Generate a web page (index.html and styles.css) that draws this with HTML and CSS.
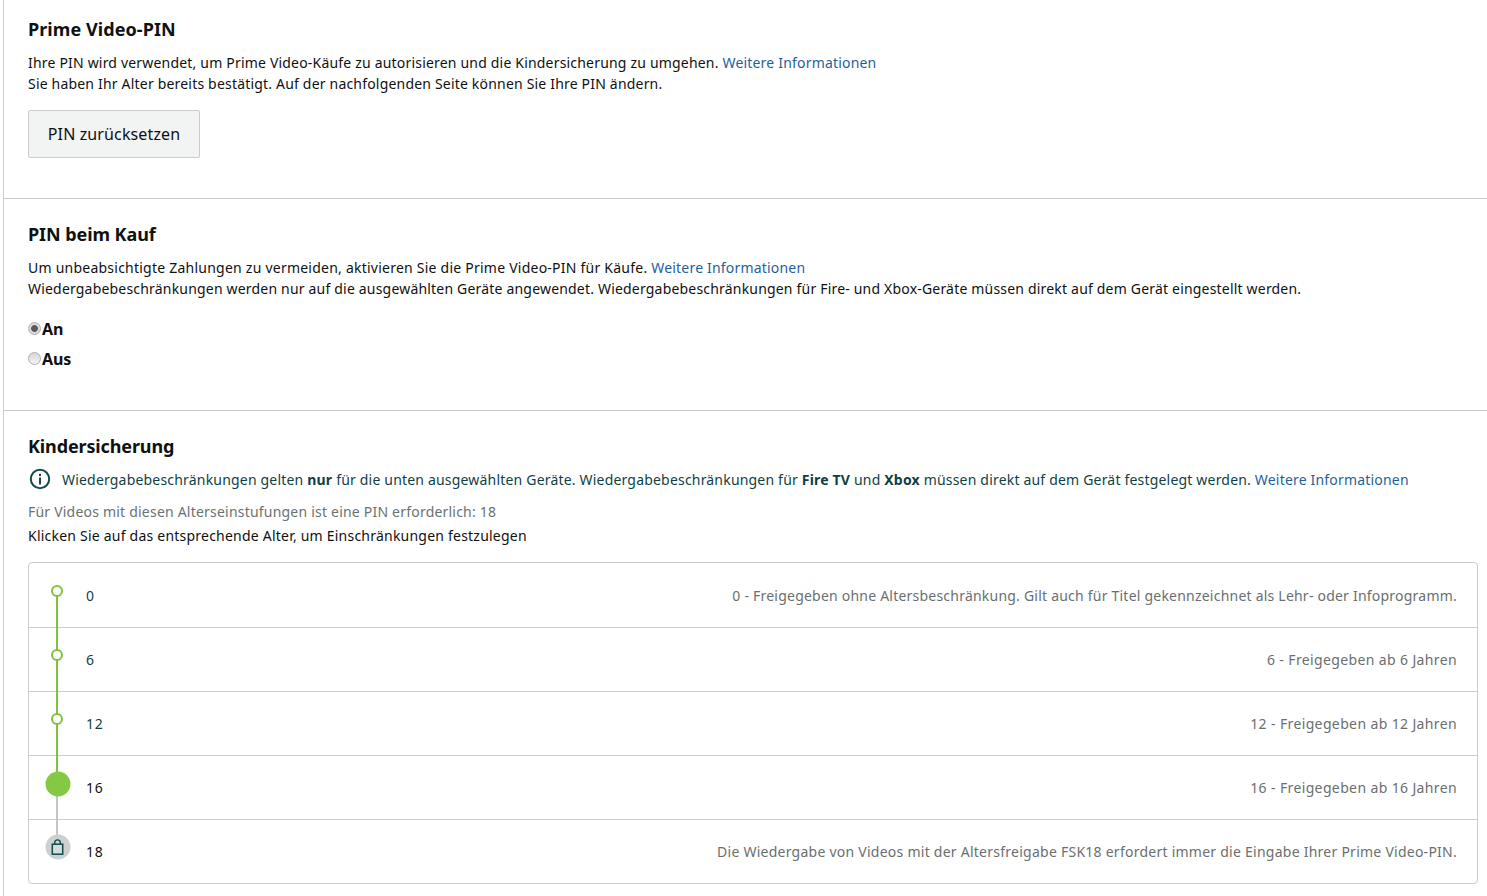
FILE: index.html
```html
<!DOCTYPE html>
<html lang="de">
<head>
<meta charset="utf-8">
<title>Prime Video-PIN</title>
<link rel="stylesheet" href="styles.css">
</head>
<body>
<main class="page">
  <section class="section section-pin">
    <h2 class="title">Prime Video-PIN</h2>
    <p class="text">Ihre PIN wird verwendet, um Prime Video-Käufe zu autorisieren und die Kindersicherung zu umgehen. <a class="link" href="#">Weitere Informationen</a><br>Sie haben Ihr Alter bereits bestätigt. Auf der nachfolgenden Seite können Sie Ihre PIN ändern.</p>
    <button class="button" type="button">PIN zurücksetzen</button>
  </section>
  <section class="section section-buy">
    <h2 class="title">PIN beim Kauf</h2>
    <p class="text"><span class="wide">Um unbeabsichtigte Zahlungen zu vermeiden, aktivieren Sie die Prime Video-PIN für Käufe. </span><a class="link" href="#">Weitere Informationen</a><br>Wiedergabebeschränkungen werden nur auf die ausgewählten Geräte angewendet. Wiedergabebeschränkungen für Fire- und Xbox-Geräte müssen direkt auf dem Gerät eingestellt werden.</p>
    <div class="radios">
      <label class="radio"><span class="radio-dot radio-on"></span>An</label>
      <label class="radio"><span class="radio-dot"></span>Aus</label>
    </div>
  </section>
  <section class="section section-kids">
    <h2 class="title">Kindersicherung</h2>
    <div class="notice">
      <svg class="info" viewBox="0 0 24 24" width="24" height="24" aria-hidden="true"><circle cx="12" cy="12" r="9.2" fill="none" stroke="#0f4c4a" stroke-width="2"/><rect x="11" y="10.5" width="2" height="7" fill="#0f4c4a"/><rect x="11" y="6.8" width="2" height="2.2" fill="#0f4c4a"/></svg>
      <p class="notice-text">Wiedergabebeschränkungen gelten <b>nur</b> für die unten ausgewählten Geräte. Wiedergabebeschränkungen für <b>Fire TV</b> und <b>Xbox</b> müssen direkt auf dem Gerät festgelegt werden. <a class="link" href="#">Weitere Informationen</a></p>
    </div>
    <p class="muted">Für Videos mit diesen Alterseinstufungen ist eine PIN erforderlich: 18</p>
    <p class="hint">Klicken Sie auf das entsprechende Alter, um Einschränkungen festzulegen</p>
    <ul class="ratings">
      <li class="rating on"><span class="node ring"></span><span class="age">0</span><span class="desc">0 - Freigegeben ohne Altersbeschränkung. Gilt auch für Titel gekennzeichnet als Lehr- oder Infoprogramm.</span></li>
      <li class="rating on"><span class="node ring"></span><span class="age">6</span><span class="desc desc-short">6 - Freigegeben ab 6 Jahren</span></li>
      <li class="rating on"><span class="node ring"></span><span class="age">12</span><span class="desc desc-short">12 - Freigegeben ab 12 Jahren</span></li>
      <li class="rating current"><span class="node solid"></span><span class="age strong">16</span><span class="desc desc-short">16 - Freigegeben ab 16 Jahren</span></li>
      <li class="rating locked"><span class="node lock"><svg viewBox="0 0 16 18" width="16" height="18" aria-hidden="true"><path d="M5.2 5.6V4.2a2.8 2.8 0 0 1 5.6 0v1.4" fill="none" stroke="#0f4c4a" stroke-width="1.4"/><rect x="2.8" y="5.7" width="10.4" height="10" fill="#d8dbdb" stroke="#0f4c4a" stroke-width="1.5"/></svg></span><span class="age strong">18</span><span class="desc desc-long">Die Wiedergabe von Videos mit der Altersfreigabe FSK18 erfordert immer die Eingabe Ihrer Prime Video-PIN.</span></li>
    </ul>
  </section>
</main>
</body>
</html>
```
FILE: styles.css
```css
* { box-sizing: border-box; }
html, body { margin: 0; padding: 0; }
body {
  font-family: "Noto Sans", "Open Sans", sans-serif;
  font-size: 14px;
  line-height: 21px;
  color: #0f1111;
  background: #fff;
  overflow: hidden;
  height: 896px;
}
.page {
  margin-left: 3px;
  border-left: 1px solid #ccc;
  min-height: 896px;
}
.section { padding: 0 9px 0 24px; border-bottom: 1px solid #ccc; }
.section-pin { height: 199px; padding-top: 17px; }
.section-buy { height: 212px; padding-top: 23px; }
.section-kids { border-bottom: 0; padding-top: 23px; }
.title {
  margin: 0 0 11px;
  font-size: 18px;
  line-height: 24px;
  font-weight: 700;
  color: #0f1111;
}
.section-pin .title { letter-spacing: 0.07px; }
.section-buy .title { letter-spacing: -0.07px; }
.section-kids .title { letter-spacing: -0.13px; margin-bottom: 10px; }
.text { margin: 0; letter-spacing: 0.19px; }
.wide { letter-spacing: 0.235px; }
.link { color: #1f5f9e; text-decoration: none; }
.button {
  display: block;
  margin-top: 16px;
  width: 172px;
  height: 48px;
  padding: 0;
  font: inherit;
  font-size: 16px;
  letter-spacing: 0.12px;
  color: #0f1111;
  background: #f2f3f3;
  border: 1px solid #ccc;
  border-radius: 2px;
}
.radios { margin-top: 19px; display: flex; flex-direction: column; gap: 8px; }
.radio {
  display: flex;
  align-items: center;
  height: 22px;
  font-size: 16px;
  font-weight: 700;
  letter-spacing: -0.1px;
}
.radio-dot {
  width: 13px;
  height: 13px;
  margin: -2px 1px 0 0;
  border-radius: 50%;
  border: 1px solid #b0b0b0;
  background: linear-gradient(#d6d6d6, #f4f4f4);
  flex: none;
}
.radio-on { background: radial-gradient(circle, #5a5a5a 0 3px, #dcdcdc 3.8px); }
.notice { display: flex; align-items: center; margin-top: -1px; height: 24px; gap: 10px; }
.info { flex: none; }
.notice-text { margin: 0; color: #0f3f45; letter-spacing: 0.19px; }
.muted { margin: 10px 0 0; color: #6a7273; letter-spacing: 0.21px; }
.hint { margin: 3px 0 0; letter-spacing: 0.22px; }
.ratings {
  list-style: none;
  margin: 16px 0 0;
  padding: 0;
  border: 1px solid #ccc;
  border-radius: 4px;
}
.rating {
  position: relative;
  display: flex;
  justify-content: space-between;
  align-items: center;
  height: 64px;
  padding: 0 20px 0 57px;
  border-bottom: 1px solid #ccc;
  letter-spacing: 0.22px;
}
.rating:first-child { margin-top: 1px; }
.rating:last-child { border-bottom: 0; height: 63px; }
.age { color: #0f3f45; letter-spacing: 0.8px; }
.age.strong { color: #0f1111; }
.desc { color: #6a6f70; }
.desc-short { letter-spacing: 0.37px; }
.desc-long { letter-spacing: 0.25px; }
.node { position: absolute; left: 28px; top: 27px; transform: translate(-50%, -50%); border-radius: 50%; z-index: 2; }
.ring { width: 12px; height: 12px; border: 2px solid #7fc241; background: #fff; }
.solid { width: 25px; height: 25px; left: 28.5px; top: 27.5px; background: #84c944; }
.lock {
  width: 25px;
  height: 25px;
  left: 28.5px;
  background: #cdd0d0;
  display: flex;
  align-items: center;
  justify-content: center;
}
.rating::after {
  content: "";
  position: absolute;
  left: 27px;
  width: 2px;
  top: 27px;
  height: 64px;
  background: #7fc241;
  z-index: 1;
}
.current::after { background: #c4c6c6; }
.locked::after { display: none; }
```
